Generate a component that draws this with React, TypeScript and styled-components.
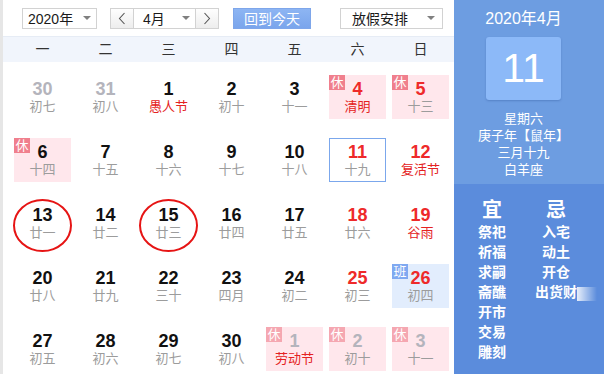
import React from 'react';
import styled, { createGlobalStyle, css } from 'styled-components';

const Global = createGlobalStyle`
  html, body { margin: 0; padding: 0; width: 604px; height: 374px; overflow: hidden; background: #fff; }
  body { font-family: "Liberation Sans", "Noto Sans CJK SC", Arial, sans-serif; }
  * { box-sizing: border-box; }
`;

const Frame = styled.div`
  display: flex;
  width: 604px;
  height: 374px;
  overflow: hidden;
`;

const Main = styled.div`
  width: 454px;
  flex: none;
  border-left: 3px solid #e6e6e6;
  display: flex;
  flex-direction: column;
`;

const Toolbar = styled.div`
  height: 37px;
  flex: none;
  display: flex;
  align-items: center;
  padding-left: 19px;
  border-bottom: 1px solid #e6ecf5;
`;

const Select = styled.div<{ $w: number; $ml?: number; $pl?: number; $pr?: number }>`
  width: ${(p) => p.$w}px;
  margin-left: ${(p) => p.$ml ?? 0}px;
  height: 21px;
  border: 1px solid #d2d2d2;
  background: #fff;
  display: flex;
  align-items: center;
  justify-content: space-between;
  padding: 0 ${(p) => p.$pr ?? 5}px 0 ${(p) => p.$pl ?? 5}px;
  font-size: 14px;
  color: #1a1a1a;
  white-space: nowrap;
`;

const Caret = styled.span`
  width: 0;
  height: 0;
  border-left: 4px solid transparent;
  border-right: 4px solid transparent;
  border-top: 4px solid #808080;
`;

const MonthGroup = styled.div`
  display: flex;
  margin-left: 13px;
  height: 21px;
  border: 1px solid #d2d2d2;
`;

const NavBtn = styled.div<{ $side: 'l' | 'r' }>`
  width: 23px;
  display: flex;
  align-items: center;
  justify-content: center;
  background: linear-gradient(#fefefe, #ededed);
  ${(p) => (p.$side === 'l' ? css`border-right: 1px solid #d2d2d2;` : css`border-left: 1px solid #d2d2d2;`)}
`;

const MonthSelect = styled.div`
  width: 61px;
  display: flex;
  align-items: center;
  justify-content: space-between;
  padding: 0 5px 0 9px;
  font-size: 14px;
  color: #1a1a1a;
  background: #fff;
`;

const TodayBtn = styled.div`
  margin-left: 14px;
  width: 78px;
  height: 21px;
  display: flex;
  align-items: center;
  justify-content: center;
  background: linear-gradient(#8db5f3, #7aa5ec);
  border: 1px solid #7ea6ea;
  color: #fff;
  font-size: 14px;
`;

const WeekHeader = styled.div`
  height: 25px;
  flex: none;
  display: grid;
  grid-template-columns: repeat(7, 63px);
  padding-left: 8px;
  background: #f1f5fc;
`;

const WeekDay = styled.div`
  text-align: center;
  line-height: 25px;
  font-size: 14px;
  color: #333;
`;

const Grid = styled.div`
  display: grid;
  grid-template-columns: repeat(7, 63px);
  grid-auto-rows: 63px;
  padding-left: 8px;
`;

type Tag = 'rest' | 'work';

const Cell = styled.div<{ $tag?: Tag; $sel?: boolean }>`
  position: relative;
  margin: 13px 3px 0;
  height: 44px;
  padding-top: 3px;
  text-align: center;
  border: 1px solid ${(p) => (p.$sel ? '#7ba7ec' : 'transparent')};
  background: ${(p) => (p.$tag === 'rest' ? '#ffe7ec' : p.$tag === 'work' ? '#e2edfd' : '#fff')};
`;

const Num = styled.div<{ $c: string }>`
  font-size: 18px;
  font-weight: bold;
  line-height: 20px;
  color: ${(p) => p.$c};
`;

const Lunar = styled.div<{ $c: string }>`
  font-size: 13px;
  line-height: 16px;
  color: ${(p) => p.$c};
`;

const Badge = styled.span<{ $tag: Tag; $faded?: boolean }>`
  position: absolute;
  left: -1px;
  top: -1px;
  width: 16px;
  height: 15px;
  font-size: 13px;
  line-height: 15px;
  text-align: center;
  color: #fff;
  background: ${(p) => (p.$tag === 'work' ? '#7fa9f1' : p.$faded ? '#f5a7b1' : '#f07f8d')};
`;

const Circle = styled.span`
  position: absolute;
  left: -2px;
  top: -3px;
  width: 59px;
  height: 53px;
  border: 2px solid #e61414;
  border-radius: 50%;
`;

const Side = styled.div`
  flex: 1;
  display: flex;
  flex-direction: column;
  color: #fff;
`;

const SideTop = styled.div`
  height: 184px;
  flex: none;
  background: #6d9de1;
  display: flex;
  flex-direction: column;
  align-items: center;
  padding: 9px 11px 0 0;
`;

const SideTitle = styled.div`
  font-size: 16px;
  line-height: 20px;
`;

const DayBox = styled.div`
  margin-top: 8px;
  width: 75px;
  height: 63px;
  border-radius: 3px;
  background: #8cb9f8;
  box-shadow: 0 1px 2px rgba(40, 80, 150, 0.35);
  display: flex;
  align-items: center;
  justify-content: center;
  font-size: 41px;
  font-family: "Liberation Sans", Arial, sans-serif;
`;

const InfoList = styled.div`
  margin-top: 10px;
  text-align: center;
  font-size: 13px;
  line-height: 17px;
`;

const SideBottom = styled.div`
  flex: 1;
  background: #5b8cdc;
  display: flex;
  gap: 8px;
  padding: 14px 0 0 10px;
`;

const YiJiCol = styled.div`
  width: 56px;
  text-align: center;
`;

const YiJiHead = styled.div`
  font-size: 20px;
  font-weight: bold;
  line-height: 24px;
`;

const YiJiItem = styled.div`
  font-size: 14px;
  font-weight: bold;
  line-height: 20px;
  white-space: nowrap;
`;

const Faded = styled.span`
  position: relative;
  &::after {
    content: '';
    position: absolute;
    left: 100%;
    top: 3px;
    width: 20px;
    height: 14px;
    background: linear-gradient(to right, rgba(255, 255, 255, 0.85), rgba(255, 255, 255, 0));
  }
`;

const Chevron = ({ dir }: { dir: 'l' | 'r' }) => (
  <svg width="8" height="13" viewBox="0 0 8 13">
    <polyline
      points={dir === 'l' ? '6.5,1 1.5,6.5 6.5,12' : '1.5,1 6.5,6.5 1.5,12'}
      fill="none"
      stroke="#555"
      strokeWidth="1.1"
    />
  </svg>
);

type Day = {
  n: number;
  l: string;
  other?: boolean;
  numRed?: boolean;
  lunarRed?: boolean;
  tag?: Tag;
  sel?: boolean;
  circle?: boolean;
};

const days: Day[] = [
  { n: 30, l: '初七', other: true },
  { n: 31, l: '初八', other: true },
  { n: 1, l: '愚人节', lunarRed: true },
  { n: 2, l: '初十' },
  { n: 3, l: '十一' },
  { n: 4, l: '清明', numRed: true, lunarRed: true, tag: 'rest' },
  { n: 5, l: '十三', numRed: true, tag: 'rest' },
  { n: 6, l: '十四', tag: 'rest' },
  { n: 7, l: '十五' },
  { n: 8, l: '十六' },
  { n: 9, l: '十七' },
  { n: 10, l: '十八' },
  { n: 11, l: '十九', numRed: true, sel: true },
  { n: 12, l: '复活节', numRed: true, lunarRed: true },
  { n: 13, l: '廿一', circle: true },
  { n: 14, l: '廿二' },
  { n: 15, l: '廿三', circle: true },
  { n: 16, l: '廿四' },
  { n: 17, l: '廿五' },
  { n: 18, l: '廿六', numRed: true },
  { n: 19, l: '谷雨', numRed: true, lunarRed: true },
  { n: 20, l: '廿八' },
  { n: 21, l: '廿九' },
  { n: 22, l: '三十' },
  { n: 23, l: '四月' },
  { n: 24, l: '初二' },
  { n: 25, l: '初三', numRed: true },
  { n: 26, l: '初四', numRed: true, tag: 'work' },
  { n: 27, l: '初五' },
  { n: 28, l: '初六' },
  { n: 29, l: '初七' },
  { n: 30, l: '初八' },
  { n: 1, l: '劳动节', other: true, lunarRed: true, tag: 'rest' },
  { n: 2, l: '初十', other: true, tag: 'rest' },
  { n: 3, l: '十一', other: true, tag: 'rest' },
];

const weekdays = ['一', '二', '三', '四', '五', '六', '日'];
const yi = ['祭祀', '祈福', '求嗣', '斋醮', '开市', '交易', '雕刻'];
const ji = ['入宅', '动土', '开仓'];

export default function App() {
  return (
    <>
      <Global />
      <Frame>
        <Main>
          <Toolbar>
            <Select $w={75}>
              <span>2020年</span>
              <Caret />
            </Select>
            <MonthGroup>
              <NavBtn $side="l">
                <Chevron dir="l" />
              </NavBtn>
              <MonthSelect>
                <span>4月</span>
                <Caret />
              </MonthSelect>
              <NavBtn $side="r">
                <Chevron dir="r" />
              </NavBtn>
            </MonthGroup>
            <TodayBtn>回到今天</TodayBtn>
            <Select $w={103} $ml={29} $pl={11} $pr={7}>
              <span>放假安排</span>
              <Caret />
            </Select>
          </Toolbar>
          <WeekHeader>
            {weekdays.map((w) => (
              <WeekDay key={w}>{w}</WeekDay>
            ))}
          </WeekHeader>
          <Grid>
            {days.map((d, i) => {
              const numColor = d.other ? '#b4b4bc' : d.numRed ? '#ee2a2a' : '#111';
              const lunarColor = d.lunarRed ? '#e42222' : '#9c9c9c';
              return (
                <Cell key={i} $tag={d.tag} $sel={d.sel}>
                  {d.tag && <Badge $tag={d.tag} $faded={d.other}>{d.tag === 'rest' ? '休' : '班'}</Badge>}
                  <Num $c={numColor}>{d.n}</Num>
                  <Lunar $c={lunarColor}>{d.l}</Lunar>
                  {d.circle && <Circle />}
                </Cell>
              );
            })}
          </Grid>
        </Main>
        <Side>
          <SideTop>
            <SideTitle>2020年4月</SideTitle>
            <DayBox>11</DayBox>
            <InfoList>
              <div>星期六</div>
              <div>庚子年【鼠年】</div>
              <div>三月十九</div>
              <div>白羊座</div>
            </InfoList>
          </SideTop>
          <SideBottom>
            <YiJiCol>
              <YiJiHead>宜</YiJiHead>
              {yi.map((t) => (
                <YiJiItem key={t}>{t}</YiJiItem>
              ))}
            </YiJiCol>
            <YiJiCol>
              <YiJiHead>忌</YiJiHead>
              {ji.map((t) => (
                <YiJiItem key={t}>{t}</YiJiItem>
              ))}
              <YiJiItem>
                <Faded>出货财</Faded>
              </YiJiItem>
            </YiJiCol>
          </SideBottom>
        </Side>
      </Frame>
    </>
  );
}
